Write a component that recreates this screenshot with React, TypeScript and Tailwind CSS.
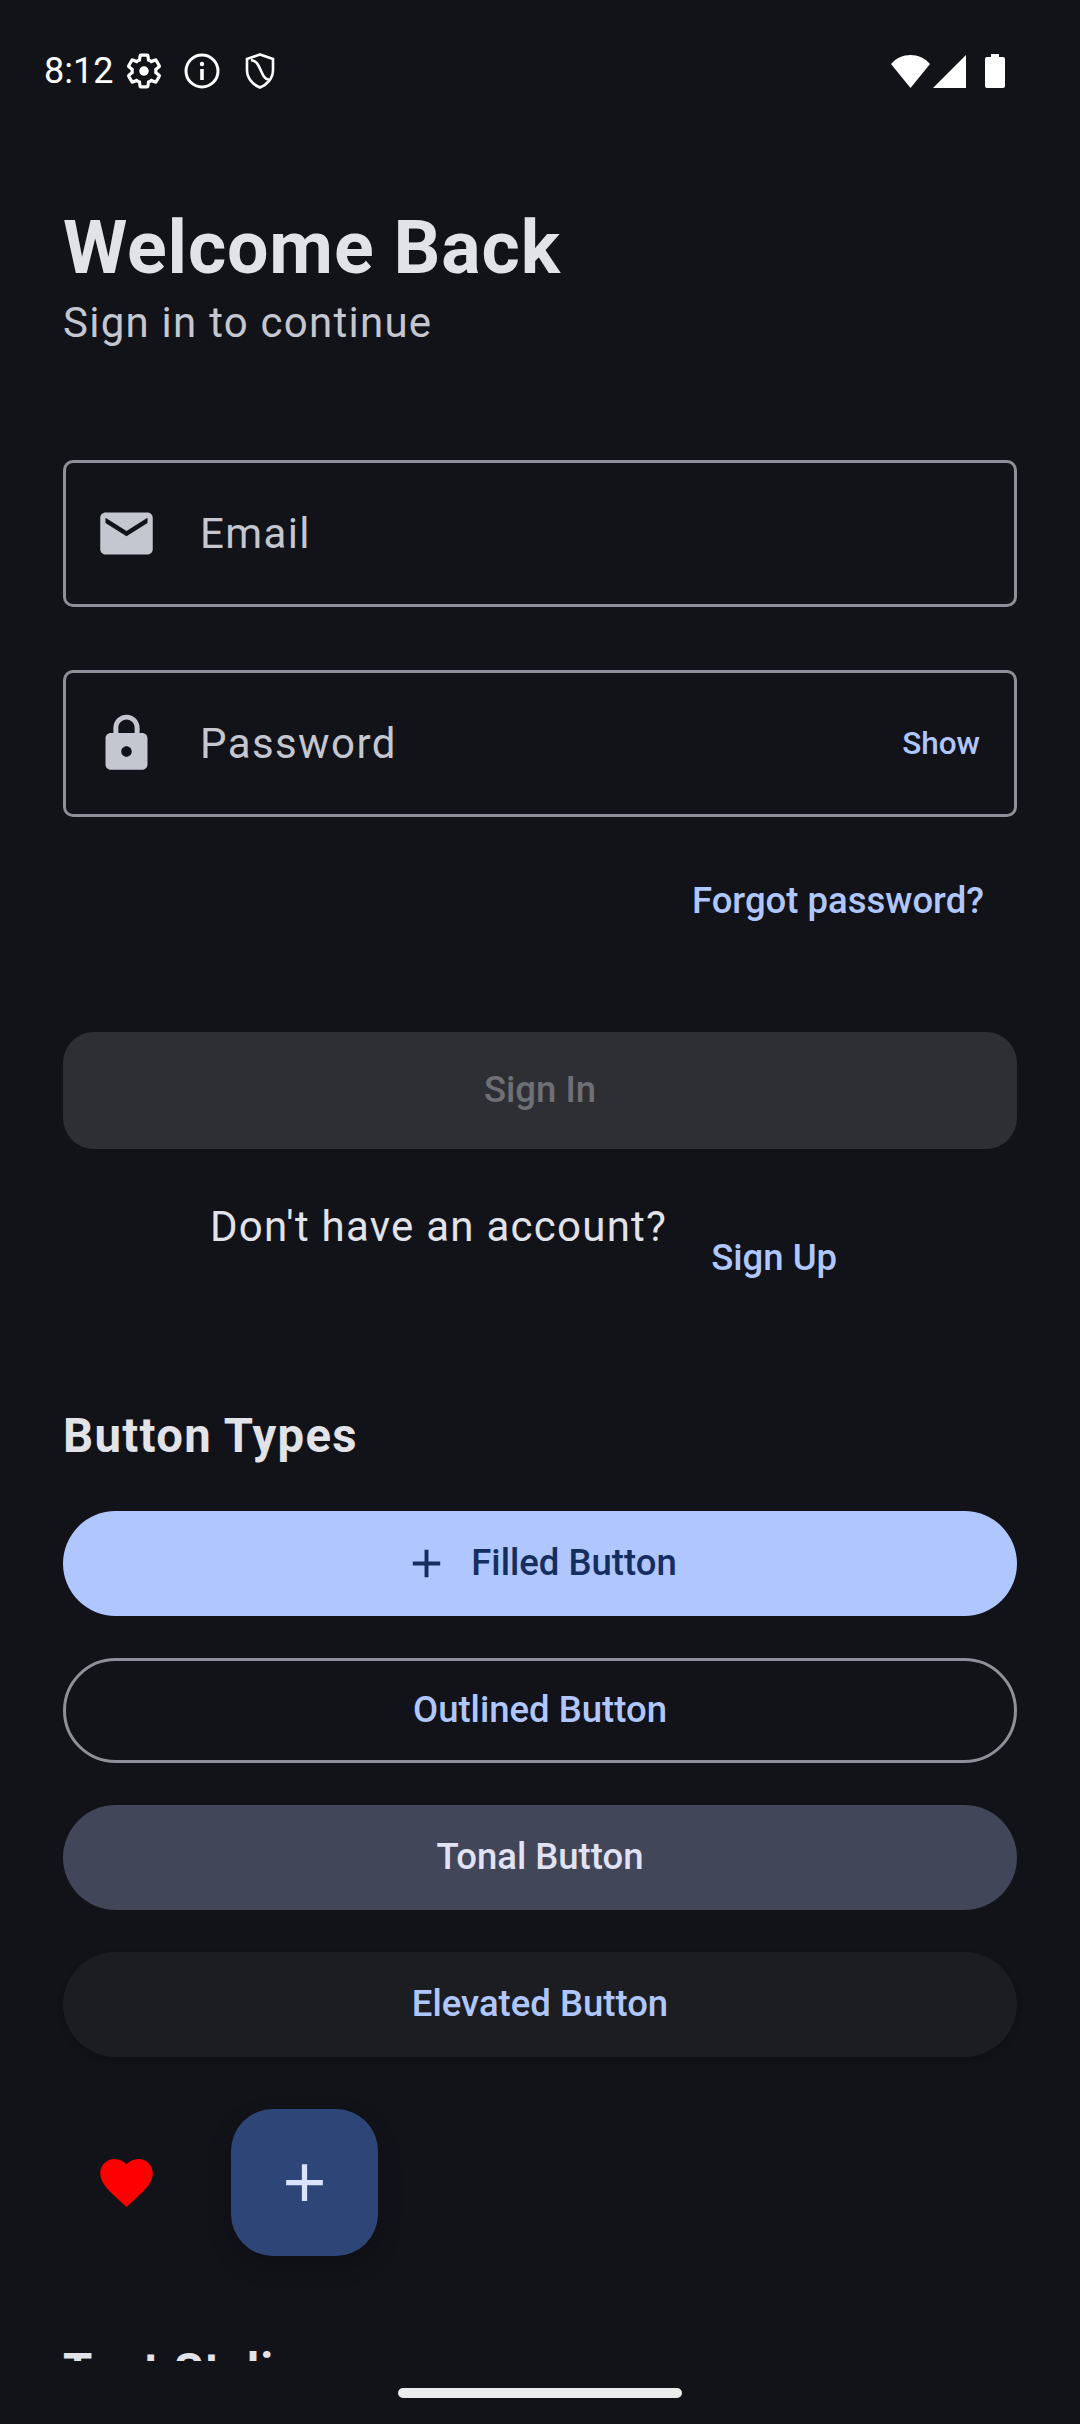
import React from 'react';

const roboto = { fontFamily: 'Roboto, sans-serif' };

const AddIcon = ({ className }: { className: string }) => (
  <svg viewBox="0 0 24 24" className={className} fill="currentColor">
    <path d="M19 13h-6v6h-2v-6H5v-2h6V5h2v6h6v2z" />
  </svg>
);

const StatusBar = () => (
  <div className="flex items-center justify-between h-[142px] pl-[44px] pr-[75px] text-white shrink-0">
    <div className="flex items-center">
      <span className="text-[36px] leading-none w-[81px]">8:12</span>
      <svg viewBox="0 0 24 24" className="w-[38px] h-[38px]" fill="none" stroke="white" strokeWidth="2">
        <path d="M19.43 12.98c.04-.32.07-.64.07-.98 0-.34-.03-.66-.07-.98l2.11-1.65c.19-.15.24-.42.12-.64l-2-3.46c-.09-.16-.26-.25-.44-.25-.06 0-.12.01-.17.03l-2.49 1c-.52-.4-1.08-.73-1.69-.98l-.38-2.65C14.46 2.18 14.25 2 14 2h-4c-.25 0-.46.18-.49.42l-.38 2.65c-.61.25-1.17.59-1.69.98l-2.49-1c-.06-.02-.12-.03-.18-.03-.17 0-.34.09-.43.25l-2 3.46c-.13.22-.07.49.12.64l2.11 1.65c-.04.32-.07.65-.07.98 0 .33.03.66.07.98l-2.11 1.65c-.19.15-.24.42-.12.64l2 3.46c.09.16.26.25.44.25.06 0 .12-.01.17-.03l2.49-1c.52.4 1.08.73 1.69.98l.38 2.65c.03.24.24.42.49.42h4c.25 0 .46-.18.49-.42l.38-2.65c.61-.25 1.17-.59 1.69-.98l2.49 1c.06.02.12.03.18.03.17 0 .34-.09.43-.25l2-3.46c.12-.22.07-.49-.12-.64l-2.11-1.65z" />
        <circle cx="12" cy="12" r="3" fill="white" stroke="none" />
      </svg>
      <svg viewBox="0 0 36 36" className="w-[36px] h-[36px] ml-[21px]" fill="none" stroke="white" strokeWidth="3">
        <circle cx="18" cy="18" r="16" />
        <rect x="16.2" y="16" width="3.6" height="11" fill="white" stroke="none" />
        <circle cx="18" cy="11" r="2.2" fill="white" stroke="none" />
      </svg>
      <svg viewBox="0 0 30 36" className="w-[30px] h-[36px] ml-[25px]" fill="none" stroke="white" strokeWidth="2.6">
        <path d="M15 1.5 L28 6 V17 C28 25 22.5 31.500 15 34.500 C7.500 31.500 2 25 2 17 V6 Z" />
        <path d="M6 7 C13 8 14 14 17 20 C19 25 22 27 24 26" />
      </svg>
    </div>
    <div className="flex items-center">
      <svg viewBox="0 0 39 33" className="w-[39px] h-[33px]" fill="white">
        <path d="M0 9 C10 -3 29 -3 39 9 L19.500 33 Z" />
      </svg>
      <svg viewBox="0 0 33 33" className="w-[33px] h-[33px] ml-[3px]" fill="white">
        <path d="M33 0 V33 H0 Z" />
      </svg>
      <svg viewBox="0 0 20 34" className="w-[20px] h-[34px] ml-[19px]" fill="white">
        <path d="M6 0 H14 V3 H18 C19.200 3 20 3.800 20 5 V32 C20 33.200 19.200 34 18 34 H2 C0.800 34 0 33.200 0 32 V5 C0 3.800 0.800 3 2 3 H6 Z" />
      </svg>
    </div>
  </div>
);

const Field = ({ label, icon, trailing }: { label: string; icon: React.ReactNode; trailing?: React.ReactNode }) => (
  <div className="flex items-center h-[147px] border-[3px] border-[#8e9099] rounded-[10px]">
    <div className="w-[120px] mr-[14px] shrink-0 flex justify-center">{icon}</div>
    <span className="flex-1 text-[42px] leading-none tracking-[1.4px] text-[#c4c6d0]">{label}</span>
    {trailing}
  </div>
);

const PillButton = ({ children, className }: { children: React.ReactNode; className: string }) => (
  <div className={`flex items-center justify-center h-[105px] rounded-full text-[36.5px] font-medium ${className}`}>
    {children}
  </div>
);

export default function App() {
  return (
    <div className="w-[1080px] h-[2424px] bg-[#111318] flex flex-col overflow-hidden" style={roboto}>
      <StatusBar />
      <div className="h-[2219px] overflow-hidden px-[63px] shrink-0">
        <h1 className="mt-[60px] text-[73.5px] leading-[93px] tracking-[0.85px] font-bold text-[#e2e2e9]">Welcome Back</h1>
        <p className="text-[42px] leading-[56px] tracking-[1.25px] text-[#c4c6d0]">Sign in to continue</p>

        <div className="mt-[109px]">
          <Field
            label="Email"
            icon={
              <svg viewBox="0 0 24 24" className="w-[63px] h-[63px]" fill="#c4c6d0">
                <path d="M20 4H4c-1.1 0-2 .9-2 2v12c0 1.1.9 2 2 2h16c1.1 0 2-.9 2-2V6c0-1.1-.9-2-2-2zm0 4-8 5-8-5V6l8 5 8-5v2z" />
              </svg>
            }
          />
        </div>
        <div className="mt-[63px]">
          <Field
            label="Password"
            icon={
              <svg viewBox="0 0 24 24" className="w-[63px] h-[63px]" fill="#c4c6d0">
                <path d="M18 8h-1V6c0-2.76-2.24-5-5-5S7 3.24 7 6v2H6c-1.1 0-2 .9-2 2v10c0 1.1.9 2 2 2h12c1.1 0 2-.9 2-2V10c0-1.1-.9-2-2-2zm-6 9c-1.1 0-2-.9-2-2s.9-2 2-2 2 .9 2 2-.9 2-2 2zm3.1-9H8.900V6c0-1.710 1.390-3.100 3.100-3.100 1.710 0 3.100 1.390 3.100 3.100v2z" />
              </svg>
            }
            trailing={<span className="pr-[34px] text-[31.5px] font-medium text-[#b0c6ff]">Show</span>}
          />
        </div>

        <div className="mt-[54px] flex justify-end pr-[33px]">
          <span className="text-[36.5px] leading-[60px] font-medium text-[#b0c6ff]">Forgot password?</span>
        </div>

        <div className="mt-[101px] h-[117px] rounded-[31px] bg-[#2d2f34] flex items-center justify-center text-[36.5px] font-medium text-[#6f7076]">
          Sign In
        </div>

        <div className="mt-[50px] flex items-start pl-[147px]">
          <span className="text-[42px] leading-[56px] tracking-[1.25px] text-[#e2e2e9]">Don't have an account?</span>
          <span className="ml-[44px] mt-[31px] text-[36.5px] leading-[56px] font-medium text-[#b0c6ff]">Sign Up</span>
        </div>

        <h2 className="mt-[120px] text-[47.25px] leading-[60px] font-bold tracking-[1.3px] text-[#e2e2e9]">Button Types</h2>

        <div className="mt-[45px] flex flex-col gap-[42px]">
          <PillButton className="bg-[#b0c6ff] text-[#152e60]">
            <AddIcon className="w-[47px] h-[47px] mr-[21px]" />
            Filled Button
          </PillButton>
          <PillButton className="border-[3px] border-[#8e9099] text-[#b0c6ff]">Outlined Button</PillButton>
          <PillButton className="bg-[#414659] text-[#e1e2f3]">Tonal Button</PillButton>
          <PillButton className="bg-[#1c1d21] shadow-[0_3px_6px_rgba(0,0,0,0.2)] text-[#b0c6ff]">Elevated Button</PillButton>
        </div>

        <div className="mt-[52px] flex items-center">
          <div className="w-[126px] flex justify-center">
            <svg viewBox="0 0 24 24" className="w-[63px] h-[63px]" fill="#ff0000">
              <path d="M12 21.35l-1.45-1.32C5.4 15.36 2 12.28 2 8.5 2 5.42 4.42 3 7.5 3c1.74 0 3.41.81 4.5 2.09C13.09 3.81 14.76 3 16.5 3 19.58 3 22 5.42 22 8.5c0 3.78-3.4 6.86-8.55 11.54L12 21.35z" />
            </svg>
          </div>
          <div className="ml-[42px] w-[147px] h-[147px] rounded-[42px] bg-[#2e4677] shadow-[0_10px_24px_rgba(0,0,0,0.2)] flex items-center justify-center">
            <AddIcon className="w-[63px] h-[63px] text-[#d9e2ff]" />
          </div>
        </div>

        <h2 className="mt-[85px] text-[47.25px] leading-[60px] font-bold tracking-[1.3px] text-[#e2e2e9]">Text Styling</h2>
      </div>
      <div className="flex-1 flex justify-center pt-[27px]">
        <div className="w-[284px] h-[10px] rounded-full bg-[#ececec]" />
      </div>
    </div>
  );
}
